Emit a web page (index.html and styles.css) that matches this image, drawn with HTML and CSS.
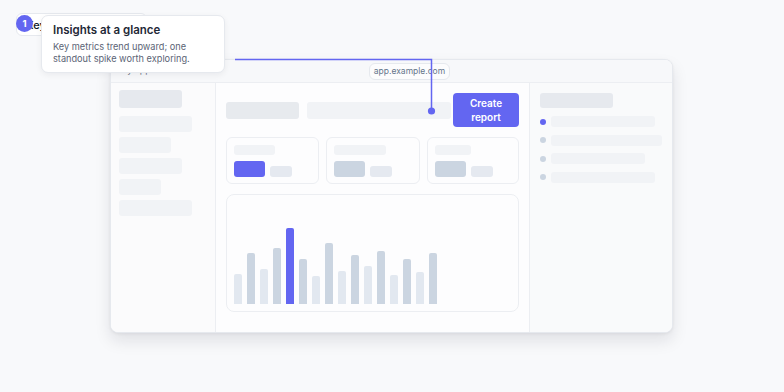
FILE: index.html
```html
<!DOCTYPE html>
<html lang="en">
<head>
<meta charset="utf-8">
<title>Insights at a glance</title>
<link rel="stylesheet" href="styles.css">
</head>
<body>
<div class="stage">
  <div class="window">
    <div class="topbar">
      <span class="app-title">My app</span>
      <span class="url">app.example.com</span>
    </div>
    <div class="body">
      <aside class="sidebar">
        <div class="sb sb-head"></div>
        <div class="sb w73"></div>
        <div class="sb w52"></div>
        <div class="sb w63"></div>
        <div class="sb w42"></div>
        <div class="sb w73"></div>
      </aside>
      <main class="main">
        <div class="header">
          <div class="hblock"></div>
          <div class="search"></div>
          <button class="cta">Create report</button>
        </div>
        <div class="cards">
          <div class="card">
            <div class="ctitle w41"></div>
            <div class="cvals"><div class="big accent"></div><div class="small"></div></div>
          </div>
          <div class="card">
            <div class="ctitle w52"></div>
            <div class="cvals"><div class="big"></div><div class="small"></div></div>
          </div>
          <div class="card">
            <div class="ctitle w36"></div>
            <div class="cvals"><div class="big"></div><div class="small"></div></div>
          </div>
        </div>
        <div class="chart">
          <div class="bar light" style="height:30px"></div>
          <div class="bar dark" style="height:51px"></div>
          <div class="bar light" style="height:35px"></div>
          <div class="bar dark" style="height:56px"></div>
          <div class="bar accent" style="height:76px"></div>
          <div class="bar dark" style="height:45px"></div>
          <div class="bar light" style="height:28px"></div>
          <div class="bar dark" style="height:61px"></div>
          <div class="bar light" style="height:33px"></div>
          <div class="bar dark" style="height:49px"></div>
          <div class="bar light" style="height:38px"></div>
          <div class="bar dark" style="height:53px"></div>
          <div class="bar light" style="height:29px"></div>
          <div class="bar dark" style="height:45px"></div>
          <div class="bar light" style="height:32px"></div>
          <div class="bar dark" style="height:51px"></div>
        </div>
      </main>
      <aside class="panel">
        <div class="ptitle"></div>
        <ul class="plist">
          <li><span class="dot active"></span><span class="pline w104"></span></li>
          <li><span class="dot"></span><span class="pline w111"></span></li>
          <li><span class="dot"></span><span class="pline w94"></span></li>
          <li><span class="dot"></span><span class="pline w104"></span></li>
        </ul>
      </aside>
    </div>
  </div>

  <div class="tag">Key insight</div>
  <div class="badge">1</div>
  <div class="callout">
    <div class="callout-title">Insights at a glance</div>
    <p class="callout-text">Key metrics trend upward; one standout spike worth exploring.</p>
  </div>
  <svg class="connector" width="784" height="392" viewBox="0 0 784 392" aria-hidden="true">
    <path d="M235 59.5 H431.5 V111" fill="none" stroke="#6366f1" stroke-width="1.5"/>
    <circle cx="431.5" cy="111" r="3.6" fill="#6366f1"/>
  </svg>
</div>
</body>
</html>
```
FILE: styles.css
```css
* { box-sizing: border-box; }
html, body { margin: 0; padding: 0; }
body {
  background: #f8f9fb;
  font-family: Inter, "Noto Sans", "Liberation Sans", sans-serif;
  color: #1f2937;
}
.stage {
  position: relative;
  width: 784px;
  height: 392px;
  overflow: hidden;
  padding: 59px 0 0 110px;
}
.window {
  width: 563px;
  height: 274px;
  background: #fdfdfe;
  border: 1px solid #e6e9ee;
  border-radius: 8px;
  box-shadow: 0 8px 16px rgba(15, 23, 42, 0.1), 0 1px 3px rgba(15, 23, 42, 0.06);
  display: flex;
  flex-direction: column;
  overflow: hidden;
}
.topbar {
  height: 23px;
  flex: none;
  background: #f7f8fa;
  border-bottom: 1px solid #eceef2;
  display: flex;
  align-items: center;
  padding-left: 8px;
}
.app-title {
  font-size: 9px;
  color: #6b7280;
  width: 250px;
  white-space: nowrap;
  position: relative;
  top: -2px;
}
.url {
  height: 17px;
  width: 81px;
  border: 1px solid #e6e9ee;
  border-radius: 6px;
  background: #fcfcfd;
  font-size: 8.5px;
  color: #64748b;
  display: flex;
  align-items: center;
  justify-content: center;
}
.body {
  flex: 1;
  display: grid;
  grid-template-columns: 105px 313px 143px;
}
.sidebar {
  border-right: 1px solid #eceef2;
  background: #fbfbfc;
  padding: 7px 0 0 8px;
  display: flex;
  flex-direction: column;
  gap: 5px;
}
.sb { height: 16px; border-radius: 3px; background: #f1f3f6; }
.sb-head { width: 63px; height: 18px; background: #e6e9ee; margin-bottom: 3px; }
.w73 { width: 73px; }
.w52 { width: 52px; }
.w63 { width: 63px; }
.w42 { width: 42px; }
.main {
  padding: 10px;
  display: flex;
  flex-direction: column;
  gap: 10px;
  background: #fdfdfe;
}
.header {
  display: flex;
  align-items: center;
  height: 34px;
}
.hblock {
  width: 73px;
  height: 17px;
  border-radius: 3px;
  background: #e7eaee;
  margin-right: 8px;
}
.search {
  width: 144px;
  height: 17px;
  border-radius: 3px;
  background: #f1f3f6;
}
.cta {
  margin-left: 2px;
  width: 66px;
  height: 34px;
  border: none;
  border-radius: 4px;
  background: #6366f1;
  color: #ffffff;
  font-family: inherit;
  font-size: 10px;
  font-weight: 600;
  line-height: 14px;
  padding: 0 8px;
  text-align: center;
}
.cards {
  display: grid;
  grid-template-columns: 93px 94px 92px;
  gap: 7px;
}
.card {
  height: 47px;
  border: 1px solid #eceef2;
  border-radius: 6px;
  background: #fdfdfe;
  padding: 7px 7px 6px;
  display: flex;
  flex-direction: column;
  gap: 6px;
}
.ctitle { height: 10px; border-radius: 3px; background: #f1f3f6; }
.w41 { width: 41px; }
.w36 { width: 36px; }
.cvals { display: flex; align-items: flex-end; gap: 5px; }
.big { width: 31px; height: 16px; border-radius: 3px; background: #cbd5e1; }
.big.accent { background: #6366f1; }
.small { width: 22px; height: 11px; border-radius: 3px; background: #e5e9f0; }
.chart {
  height: 118px;
  border: 1px solid #eceef2;
  border-radius: 8px;
  background: #fdfdfe;
  padding: 0 7px 7px;
  display: flex;
  align-items: flex-end;
  gap: 5px;
}
.bar { width: 8px; border-radius: 2px 2px 0 0; }
.bar.light { background: #e2e8f0; }
.bar.dark { background: #cbd5e1; }
.bar.accent { background: #6366f1; }
.panel {
  border-left: 1px solid #eceef2;
  background: #f9fafb;
  padding: 10px 0 0 10px;
}
.ptitle { width: 73px; height: 15px; border-radius: 3px; background: #e6e9ee; }
.plist {
  list-style: none;
  margin: 8px 0 0;
  padding: 0;
  display: flex;
  flex-direction: column;
  gap: 7.5px;
}
.plist li { display: flex; align-items: center; height: 11px; }
.dot { width: 6px; height: 6px; border-radius: 50%; background: #cbd5e1; margin-right: 5px; }
.dot.active { background: #6366f1; }
.pline { height: 11px; border-radius: 3px; background: #f1f3f6; }
.w104 { width: 104px; }
.w111 { width: 111px; }
.w94 { width: 94px; }

.tag {
  position: absolute;
  left: 16px;
  top: 13px;
  width: 131px;
  height: 23px;
  background: #ffffff;
  border: 1px solid #e6e9ee;
  border-radius: 6px;
  padding-left: 9px;
  font-size: 11px;
  font-weight: 500;
  color: #111827;
  display: flex;
  align-items: center;
}
.badge {
  position: absolute;
  left: 16px;
  top: 15px;
  width: 17px;
  height: 17px;
  border-radius: 50%;
  background: #6366f1;
  color: #ffffff;
  font-size: 9.5px;
  font-weight: 700;
  display: flex;
  align-items: center;
  justify-content: center;
}
.callout {
  position: absolute;
  left: 41px;
  top: 15px;
  width: 184px;
  height: 58px;
  background: #ffffff;
  border: 1px solid #e6e9ee;
  border-radius: 7px;
  box-shadow: 0 2px 6px rgba(15, 23, 42, 0.06);
  padding: 7px 8px 0 11px;
}
.callout-title {
  font-size: 11.5px;
  font-weight: 600;
  color: #1f2937;
  line-height: 15px;
}
.callout-text {
  margin: 3px 0 0;
  font-size: 9.2px;
  line-height: 12px;
  color: #5b6475;
}
.connector {
  position: absolute;
  left: 0;
  top: 0;
  pointer-events: none;
}
```
